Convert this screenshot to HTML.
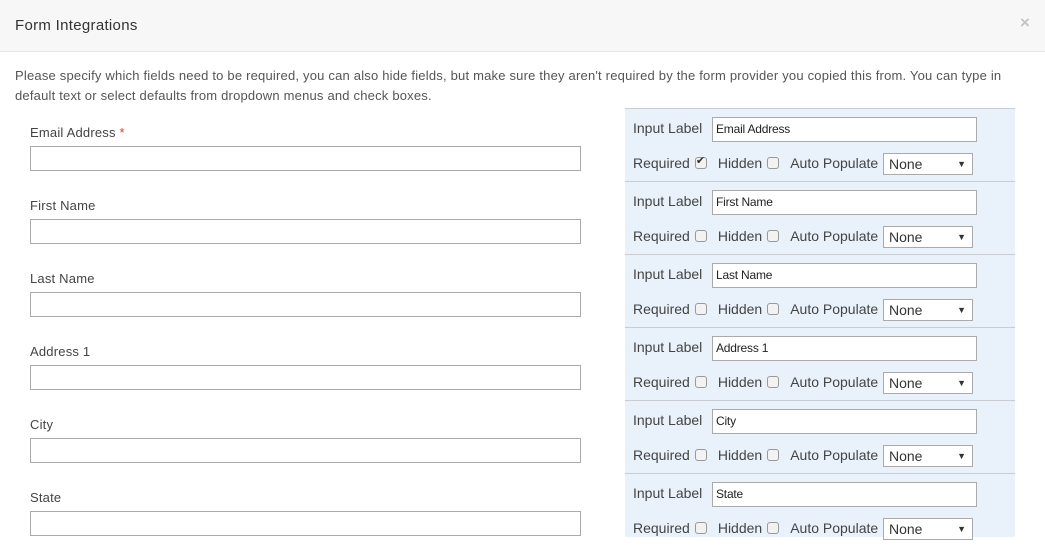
<!DOCTYPE html>
<html><head><meta charset="utf-8"><style>
*{box-sizing:border-box;margin:0;padding:0}
body{width:1045px;height:537px;overflow:hidden;background:#fff;font-family:"Liberation Sans",sans-serif;position:relative;color:#444}
.hdr{position:absolute;left:0;top:0;width:1045px;height:52px;background:#f7f7f7;border-bottom:1px solid #e3e3e3}
.hdr h1{position:absolute;left:15px;top:17px;font-size:15px;font-weight:normal;color:#333;letter-spacing:.3px}
.x{position:absolute;left:1020px;top:13px;font-size:17px;color:#c4c4c4;font-weight:bold}
.p{position:absolute;left:15px;top:66px;width:1020px;font-size:13px;line-height:20px;color:#555;letter-spacing:.2px}
.lab{position:absolute;left:30px;font-size:13px;color:#444;letter-spacing:.2px}
.lab span{color:#e33}
.in{position:absolute;left:30px;width:551px;height:25px;border:1px solid #aaa;background:#fff}
.panel{position:absolute;left:625px;top:108px;width:390px;height:429px;background:#e9f2fb}
.row{position:absolute;left:0;width:390px;height:73px;border-top:1px solid #c8ccd0;font-size:14px;color:#444}
.row .il{position:absolute;left:8px;top:11px}
.row .ti{position:absolute;left:87px;top:8px;width:265px;height:25px;border:1px solid #aaa;background:#fff;font-size:12px;padding:4px 3px;color:#222;letter-spacing:-.2px}
.row .l2{position:absolute;left:8px;top:46px;white-space:nowrap}
.cb{display:inline-block;width:12px;height:12px;border:1px solid #999;border-radius:3px;background:#f2f2f2;vertical-align:-1px;margin-left:5px;position:relative}
.cb.on::after{content:"✔";position:absolute;left:0;top:-4px;font-size:11px;color:#333}
.sp{display:inline-block;width:11px}
.sel{position:absolute;left:258px;top:44px;width:90px;height:22px;border:1px solid #aaa;background:#fff;font-size:14px;padding:2px 5px;color:#333}
.sel::after{content:"▼";position:absolute;right:6px;top:5px;font-size:9px}
</style></head><body>
<div class="hdr"><h1>Form Integrations</h1><div class="x">×</div></div>
<div class="p">Please specify which fields need to be required, you can also hide fields, but make sure they aren't required by the form provider you copied this from. You can type in default text or select defaults from dropdown menus and check boxes.</div>

<div class="lab" style="top:125px">Email Address <span>*</span></div><div class="in" style="top:146px"></div>
<div class="lab" style="top:198px">First Name</div><div class="in" style="top:219px"></div>
<div class="lab" style="top:271px">Last Name</div><div class="in" style="top:292px"></div>
<div class="lab" style="top:344px">Address 1</div><div class="in" style="top:365px"></div>
<div class="lab" style="top:417px">City</div><div class="in" style="top:438px"></div>
<div class="lab" style="top:490px">State</div><div class="in" style="top:511px"></div>

<div class="panel">
<div class="row" style="top:0"><div class="il">Input Label</div><div class="ti">Email Address</div><div class="l2">Required<span class="cb on"></span><span class="sp"></span>Hidden<span class="cb"></span><span class="sp"></span>Auto Populate</div><div class="sel">None</div></div>
<div class="row" style="top:73px"><div class="il">Input Label</div><div class="ti">First Name</div><div class="l2">Required<span class="cb"></span><span class="sp"></span>Hidden<span class="cb"></span><span class="sp"></span>Auto Populate</div><div class="sel">None</div></div>
<div class="row" style="top:146px"><div class="il">Input Label</div><div class="ti">Last Name</div><div class="l2">Required<span class="cb"></span><span class="sp"></span>Hidden<span class="cb"></span><span class="sp"></span>Auto Populate</div><div class="sel">None</div></div>
<div class="row" style="top:219px"><div class="il">Input Label</div><div class="ti">Address 1</div><div class="l2">Required<span class="cb"></span><span class="sp"></span>Hidden<span class="cb"></span><span class="sp"></span>Auto Populate</div><div class="sel">None</div></div>
<div class="row" style="top:292px"><div class="il">Input Label</div><div class="ti">City</div><div class="l2">Required<span class="cb"></span><span class="sp"></span>Hidden<span class="cb"></span><span class="sp"></span>Auto Populate</div><div class="sel">None</div></div>
<div class="row" style="top:365px"><div class="il">Input Label</div><div class="ti">State</div><div class="l2">Required<span class="cb"></span><span class="sp"></span>Hidden<span class="cb"></span><span class="sp"></span>Auto Populate</div><div class="sel">None</div></div>
</div>
</body></html>
